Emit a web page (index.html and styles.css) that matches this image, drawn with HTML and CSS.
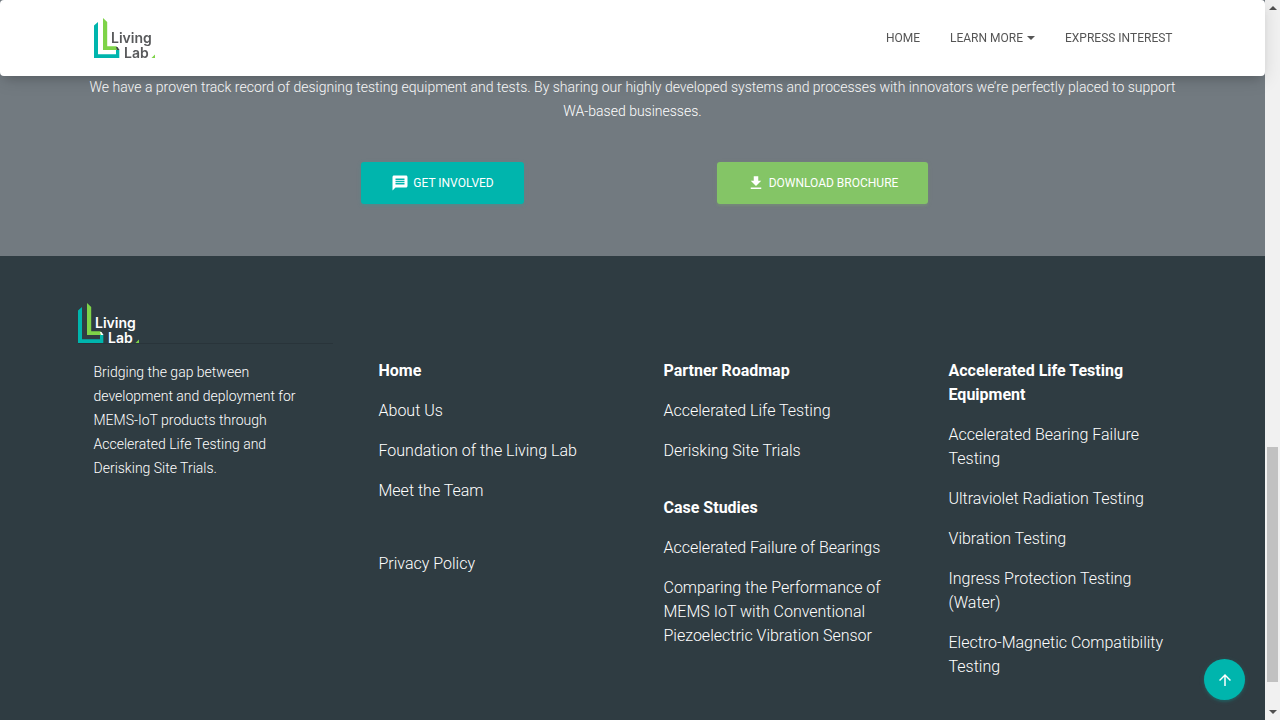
FILE: index.html
```html
<!DOCTYPE html>
<html lang="en">
<head>
<meta charset="utf-8">
<meta name="viewport" content="width=device-width, initial-scale=1">
<title>Living Lab</title>
<link rel="stylesheet" href="styles.css">
</head>
<body>
<div class="page">
  <header class="navbar">
    <div class="container navbar-inner">
      <a class="brand" href="#" aria-label="Living Lab home">
        <svg class="logo" viewBox="0 0 62 40" aria-hidden="true">
          <path fill="#00b5ad" d="M0 7.500l4-3.500v32.200h18V31.700h3.300V40H0z"/>
          <path fill="#7ed348" d="M9 0l4.200 4v24.300h9.300l2.500 3.700H9z"/>
          <path class="logo-fold" d="M22 29h1.500l2 3h-2.500z"/>
          <text class="logo-text" x="17" y="25">Living</text>
          <text class="logo-text" x="30" y="40">Lab</text>
          <path fill="#7ed348" d="M61 36.500v3.500h-3.500z"/>
        </svg>
      </a>
      <nav class="nav">
        <a class="nav-link" href="#">Home</a>
        <button class="nav-link" type="button">Learn More<span class="caret"></span></button>
        <a class="nav-link" href="#">Express Interest</a>
      </nav>
    </div>
  </header>

  <main class="ribbon">
    <div class="container">
      <p class="ribbon-text">We have a proven track record of designing testing equipment and tests. By sharing our highly developed systems and processes with innovators we’re perfectly placed to support WA-based businesses.</p>
      <div class="actions">
        <a class="btn btn-teal" href="#"><svg class="icon" viewBox="0 0 24 24" aria-hidden="true"><path d="M20 2H4c-1.100 0-2 .9-2 2v18l4-4h14c1.100 0 2-.9 2-2V4c0-1.100-.9-2-2-2zM6 9h12v2H6V9zm12 5H6v-2h12v2zm0-6H6V6h12v2z"/></svg>Get Involved</a>
        <a class="btn btn-green" href="#"><svg class="icon" viewBox="0 0 24 24" aria-hidden="true"><path d="M19 9h-4V3H9v6H5l7 7 7-7zM5 18v2h14v-2H5z"/></svg>Download Brochure</a>
      </div>
    </div>
  </main>

  <footer class="footer">
    <div class="container">
      <div class="footer-brand">
        <svg class="logo logo-light" viewBox="0 0 62 40" role="img" aria-label="Living Lab">
          <path fill="#00b5ad" d="M0 7.500l4-3.500v32.200h18V31.700h3.300V40H0z"/>
          <path fill="#7ed348" d="M9 0l4.200 4v24.300h9.300l2.500 3.700H9z"/>
          <path class="logo-fold" d="M22 29h1.500l2 3h-2.500z"/>
          <text class="logo-text" x="17" y="25">Living</text>
          <text class="logo-text" x="30" y="40">Lab</text>
          <path fill="#7ed348" d="M61 36.500v3.500h-3.500z"/>
        </svg>
      </div>
      <div class="footer-grid">
        <p class="about">Bridging the gap between development and deployment for MEMS-IoT products through Accelerated Life Testing and Derisking Site Trials.</p>
        <div class="column">
          <ul class="links">
            <li><a class="title" href="#">Home</a></li>
            <li><a href="#">About Us</a></li>
            <li><a href="#">Foundation of the Living Lab</a></li>
            <li><a href="#">Meet the Team</a></li>
          </ul>
          <ul class="links links-apart">
            <li><a href="#">Privacy Policy</a></li>
          </ul>
        </div>
        <div class="column">
          <ul class="links">
            <li><a class="title" href="#">Partner Roadmap</a></li>
            <li><a href="#">Accelerated Life Testing</a></li>
            <li><a href="#">Derisking Site Trials</a></li>
          </ul>
          <ul class="links">
            <li><a class="title" href="#">Case Studies</a></li>
            <li><a href="#">Accelerated Failure of Bearings</a></li>
            <li><a href="#">Comparing the Performance of MEMS IoT with Conventional Piezoelectric Vibration Sensor</a></li>
          </ul>
        </div>
        <div class="column">
          <ul class="links">
            <li><a class="title" href="#">Accelerated Life Testing Equipment</a></li>
            <li><a href="#">Accelerated Bearing Failure Testing</a></li>
            <li><a href="#">Ultraviolet Radiation Testing</a></li>
            <li><a href="#">Vibration Testing</a></li>
            <li><a href="#">Ingress Protection Testing (Water)</a></li>
            <li><a href="#">Electro-Magnetic Compatibility Testing</a></li>
          </ul>
        </div>
      </div>
    </div>
  </footer>

  <button class="to-top" type="button" aria-label="Back to top">
    <svg class="icon" viewBox="0 0 24 24" aria-hidden="true"><path d="M4 12l1.410 1.410L11 7.830V20h2V7.830l5.580 5.590L20 12l-8-8-8 8z"/></svg>
  </button>
</div>
<div class="scrollbar" aria-hidden="true">
  <span class="arrow arrow-up"></span>
  <span class="track"><span class="thumb"></span></span>
  <span class="arrow arrow-down"></span>
</div>
</body>
</html>
```

FILE: styles.css
```css
* {
  box-sizing: border-box;
}

body {
  margin: 0;
  padding-right: 15px;
  background: #2f3c42;
  color: #fff;
  font-family: Roboto, "Liberation Sans", sans-serif;
  font-size: 14px;
  font-weight: 300;
  line-height: 24px;
}

a {
  color: inherit;
  text-decoration: none;
}

.page {
  display: flex;
  flex-direction: column;
  min-height: 100vh;
}

.container {
  width: 100%;
  max-width: 1140px;
  margin: 0 auto;
  padding: 0 15px;
}

.navbar {
  position: fixed;
  top: 0;
  left: 0;
  right: 15px;
  z-index: 2;
  padding: 18px 0;
  border-radius: 4px;
  background: #fff;
  color: #555;
  box-shadow: 0 4px 18px 0 rgba(0, 0, 0, .12), 0 7px 10px -5px rgba(0, 0, 0, .15);
}

.navbar-inner {
  display: flex;
  align-items: center;
  justify-content: space-between;
}

.brand {
  display: flex;
  margin-left: 16px;
}

.logo {
  display: block;
  width: 62px;
  height: 40px;
  overflow: visible;
}

.logo-text {
  fill: #58595b;
  font-family: Inter, sans-serif;
  font-size: 14px;
  font-weight: 600;
}

.logo-fold {
  fill: #404348;
}

.logo-light .logo-text,
.logo-light .logo-fold {
  fill: #fff;
}

.nav {
  display: flex;
}

.nav-link {
  padding: 8px 15px;
  border: 0;
  background: none;
  color: inherit;
  font: inherit;
  font-size: 12px;
  font-weight: 400;
  line-height: 20px;
  text-transform: uppercase;
}

.caret {
  display: inline-block;
  margin-left: 4px;
  border: 4px solid transparent;
  border-top-color: currentColor;
  border-bottom: 0;
  vertical-align: 2px;
}

.ribbon {
  padding: 75px 0 52px;
  background: #727a80;
}

.ribbon-text {
  margin: 0;
  text-align: center;
}

.actions {
  display: grid;
  grid-template-columns: repeat(2, minmax(0, 380px));
  justify-content: center;
  justify-items: center;
  margin-top: 39px;
}

.btn {
  display: flex;
  align-items: center;
  gap: 4px;
  padding: 12px 30px;
  border-radius: 3px;
  font-size: 12px;
  font-weight: 400;
  line-height: 18px;
  text-transform: uppercase;
}

.btn-teal {
  background: #00b5ad;
  box-shadow: 0 2px 2px rgba(0, 181, 173, .14), 0 1px 5px rgba(0, 181, 173, .12);
}

.btn-green {
  background: #84c566;
  box-shadow: 0 2px 2px rgba(132, 197, 102, .14), 0 1px 5px rgba(132, 197, 102, .12);
}

.icon {
  display: block;
  width: 18px;
  height: 18px;
  fill: currentColor;
}

.footer {
  flex: 1;
  padding: 47px 0 30px;
  background: #2f3c42;
}

.footer-brand {
  width: calc(25% - 22px);
  border-bottom: 1px solid #29343a;
}

.footer-grid {
  display: grid;
  grid-template-columns: repeat(4, minmax(0, 1fr));
  column-gap: 30px;
  padding-top: 15px;
}

.about {
  margin: 1px 0 0;
  padding: 0 16px;
}

.column {
  display: flex;
  flex-direction: column;
  gap: 33px;
  padding: 0 16px;
}

.links {
  display: flex;
  flex-direction: column;
  gap: 16px;
  margin: 0;
  padding: 0;
  list-style: none;
  font-size: 16px;
}

.links-apart {
  padding-top: 16px;
}

.title {
  font-weight: 700;
}

.to-top {
  position: fixed;
  right: 35px;
  bottom: 20px;
  display: flex;
  align-items: center;
  justify-content: center;
  width: 41px;
  height: 41px;
  padding: 0;
  border: 0;
  border-radius: 50%;
  background: #00b5ad;
  color: #fff;
  box-shadow: 0 2px 2px rgba(0, 181, 173, .14), 0 1px 5px rgba(0, 181, 173, .2);
}

.scrollbar {
  position: fixed;
  top: 0;
  right: 0;
  bottom: 0;
  display: flex;
  flex-direction: column;
  align-items: center;
  justify-content: space-between;
  width: 15px;
  padding: 6px 0;
  background: #f1f1f1;
}

.arrow {
  border: 4px solid transparent;
}

.arrow-up {
  border-top: 0;
  border-bottom-color: #505050;
}

.arrow-down {
  border-bottom: 0;
  border-top-color: #505050;
}

.track {
  display: flex;
  flex: 1;
  flex-direction: column;
  justify-content: flex-end;
  width: 11px;
  padding-bottom: 28px;
}

.thumb {
  height: 35%;
  background: #c1c1c1;
}
```
